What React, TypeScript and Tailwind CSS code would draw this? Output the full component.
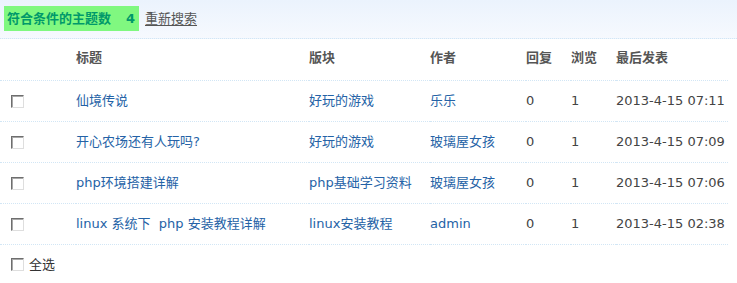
import React from "react";

const rows = [
  { title: "仙境传说", forum: "好玩的游戏", author: "乐乐", reply: "0", view: "1", last: "2013-4-15 07:11" },
  { title: "开心农场还有人玩吗?", forum: "好玩的游戏", author: "玻璃屋女孩", reply: "0", view: "1", last: "2013-4-15 07:09" },
  { title: "php环境搭建详解", forum: "php基础学习资料", author: "玻璃屋女孩", reply: "0", view: "1", last: "2013-4-15 07:06" },
  { title: "linux 系统下  php 安装教程详解", forum: "linux安装教程", author: "admin", reply: "0", view: "1", last: "2013-4-15 02:38" },
];

function Box() {
  return (
    <span className="inline-block w-[13px] h-[13px] bg-white border border-t-[#6e6e6e] border-l-[#6e6e6e] border-r-[#dedede] border-b-[#dedede] shadow-[inset_1px_1px_0_#a8a8a8] align-middle" />
  );
}

export default function App() {
  return (
    <div
      className="w-[737px] h-[283px] bg-white text-[13px] leading-none text-[#444]"
      style={{ fontFamily: '"DejaVu Sans", "Noto Sans CJK SC", sans-serif' }}
    >
      <div className="h-[39px] border-b border-dotted border-[#d2e6f5] bg-gradient-to-b from-[#ebf3fd] to-[#f6f9fe] flex items-start pt-[6px] pl-[4px]">
        <div className="h-[25px] w-[135px] bg-[#80f880] flex items-center pl-[3px] font-bold text-[#00996a] whitespace-pre">
          符合条件的主题数<span className="ml-[15px]">4</span>
        </div>
        <a className="ml-[6px] h-[25px] flex items-center text-[#555] underline underline-offset-2">重新搜索</a>
      </div>
      <table className="w-[728px] table-fixed border-collapse">
        <colgroup>
          <col className="w-[76px]" />
          <col className="w-[233px]" />
          <col className="w-[121px]" />
          <col className="w-[96px]" />
          <col className="w-[45px]" />
          <col className="w-[45px]" />
          <col className="w-[112px]" />
        </colgroup>
        <thead>
          <tr className="h-[41px] border-b border-dotted border-[#d2e6f5] text-left font-bold text-[#555]">
            <th className="p-0 pb-[3px]"></th>
            <th className="p-0 pb-[3px]">标题</th>
            <th className="p-0 pb-[3px]">版块</th>
            <th className="p-0 pb-[3px]">作者</th>
            <th className="p-0 pb-[3px]">回复</th>
            <th className="p-0 pb-[3px]">浏览</th>
            <th className="p-0 pb-[3px] whitespace-nowrap">最后发表</th>
          </tr>
        </thead>
        <tbody>
          {rows.map((r, i) => (
            <tr key={i} className="h-[41px] border-b border-dotted border-[#d2e6f5]">
              <td className="p-0 pl-[11px]"><Box /></td>
              <td className="p-0 text-[#2462a6] whitespace-pre">{r.title}</td>
              <td className="p-0 text-[#2462a6] whitespace-nowrap">{r.forum}</td>
              <td className="p-0 text-[#2462a6] whitespace-nowrap">{r.author}</td>
              <td className="p-0">{r.reply}</td>
              <td className="p-0">{r.view}</td>
              <td className="p-0 whitespace-nowrap">{r.last}</td>
            </tr>
          ))}
        </tbody>
      </table>
      <div className="flex items-center pl-[11px] pt-[13px] gap-[5px] text-[#333]">
        <Box />
        <span>全选</span>
      </div>
    </div>
  );
}
